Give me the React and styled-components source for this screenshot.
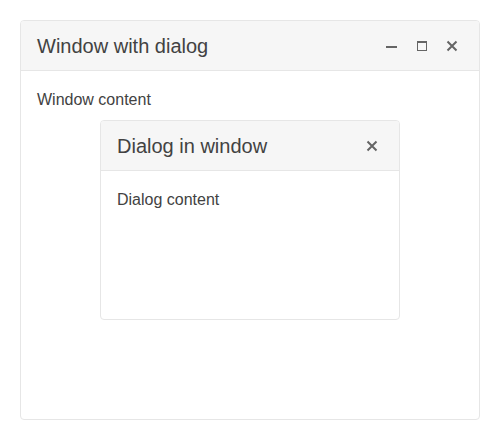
import React from "react";
import styled, { createGlobalStyle } from "styled-components";

const Global = createGlobalStyle`
  html, body { margin: 0; padding: 0; background: #ffffff; }
  body { font-family: "Liberation Sans", Arial, Helvetica, sans-serif; color: #424242; }
`;

const Stage = styled.div`
  padding: 20px;
  width: 500px;
  height: 440px;
  box-sizing: border-box;
`;

const Frame = styled.div`
  position: relative;
  box-sizing: border-box;
  width: ${(p) => p.$w}px;
  height: ${(p) => p.$h}px;
  border: 1px solid #e6e6e6;
  border-radius: 4px;
  background: #ffffff;
  display: flex;
  flex-direction: column;
  overflow: hidden;
`;

const Header = styled.div`
  display: flex;
  align-items: center;
  justify-content: space-between;
  height: 49px;
  padding: 0 16px;
  background: #f6f6f6;
  border-bottom: 1px solid #e6e6e6;
  flex-shrink: 0;
`;

const Title = styled.div`
  font-size: 20px;
  line-height: 24px;
  color: #424242;
`;

const Actions = styled.div`
  display: flex;
  align-items: center;
  gap: 8px;
`;

const IconButton = styled.button`
  width: 22px;
  height: 22px;
  padding: 0;
  border: 0;
  background: transparent;
  display: flex;
  align-items: center;
  justify-content: center;
  color: #656565;
  cursor: pointer;
  margin-top: 1px;
`;

const Body = styled.div`
  padding: 17px 16px 16px;
  font-size: 16px;
  line-height: 24px;
  color: #424242;
  flex: 1;
`;

const Overlay = styled.div`
  position: absolute;
  inset: 0;
  display: flex;
  align-items: center;
  justify-content: center;
`;

const MinIcon = () => (
  <svg width="16" height="16" viewBox="0 0 16 16">
    <rect x="2" y="8" width="11" height="2" fill="currentColor" />
  </svg>
);

const MaxIcon = () => (
  <svg width="16" height="16" viewBox="0 0 16 16">
    <path d="M3 3h10v10H3z M4 5v7h8V5z" fill="currentColor" fillRule="evenodd" />
  </svg>
);

const CloseIcon = () => (
  <svg width="16" height="16" viewBox="0 0 16 16">
    <path d="M3.5 3.5l9 9M12.5 3.5l-9 9" stroke="currentColor" strokeWidth="2" fill="none" />
  </svg>
);

export default function App() {
  return (
    <>
      <Global />
      <Stage>
        <Frame $w={460} $h={400}>
          <Header>
            <Title>Window with dialog</Title>
            <Actions>
              <IconButton aria-label="Minimize"><MinIcon /></IconButton>
              <IconButton aria-label="Maximize"><MaxIcon /></IconButton>
              <IconButton aria-label="Close"><CloseIcon /></IconButton>
            </Actions>
          </Header>
          <Body>Window content</Body>
          <Overlay>
            <Frame $w={300} $h={200}>
              <Header>
                <Title>Dialog in window</Title>
                <Actions>
                  <IconButton aria-label="Close"><CloseIcon /></IconButton>
                </Actions>
              </Header>
              <Body>Dialog content</Body>
            </Frame>
          </Overlay>
        </Frame>
      </Stage>
    </>
  );
}
